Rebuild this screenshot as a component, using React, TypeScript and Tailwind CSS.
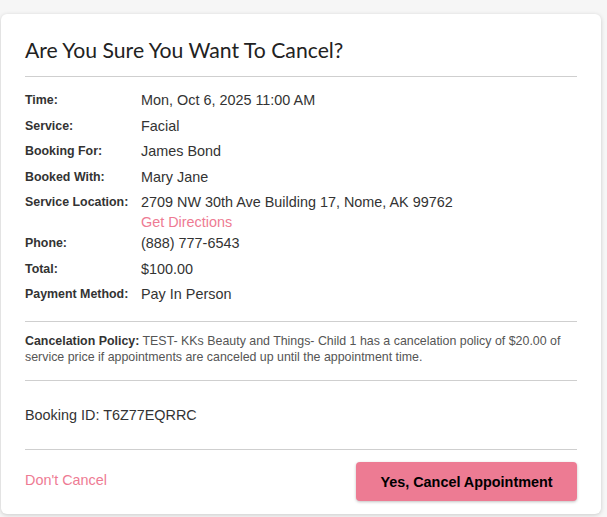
export default function App() {
  const rows: { label: string; value: string; directions?: boolean }[] = [
    { label: 'Time:', value: 'Mon, Oct 6, 2025 11:00 AM' },
    { label: 'Service:', value: 'Facial' },
    { label: 'Booking For:', value: 'James Bond' },
    { label: 'Booked With:', value: 'Mary Jane' },
    { label: 'Service Location:', value: '2709 NW 30th Ave Building 17, Nome, AK 99762', directions: true },
    { label: 'Phone:', value: '(888) 777-6543' },
    { label: 'Total:', value: '$100.00' },
    { label: 'Payment Method:', value: 'Pay In Person' },
  ]

  return (
    <div className="min-h-[517px] bg-[#f6f6f6] pt-[14px] pr-[6px] pl-[1px] font-['Liberation_Sans',Arial,sans-serif] text-[#333]">
      <div className="bg-white rounded-md shadow-[0_1px_4px_rgba(0,0,0,0.18)] px-6 pt-[22px] pb-[13px]">
        <h2 className="font-['Lato',sans-serif] text-[21.2px] leading-7 text-[#222]">Are You Sure You Want To Cancel?</h2>
        <div className="h-px bg-[#cfcfcf] mt-3" />

        {/* Booking details */}
        <div className="mt-[13px] flex flex-col gap-y-[5.5px]">
          {rows.map((row) => (
            <div key={row.label} className="flex">
              <div className="w-[116px] shrink-0 text-[12.4px] font-bold leading-5">{row.label}</div>
              <div className="text-[14.4px] leading-5">
                <div>{row.value}</div>
                {row.directions && (
                  <a href="#" className="block text-[#ee7b93] -mb-[4.5px]">Get Directions</a>
                )}
              </div>
            </div>
          ))}
        </div>

        <div className="h-px bg-[#cfcfcf] mt-[16.5px]" />
        <div className="mt-[11px] text-[12.4px] leading-4 text-[#555]">
          <b className="text-[#333]">Cancelation Policy:</b> TEST- KKs Beauty and Things- Child 1 has a cancelation policy of $20.00 of service price if appointments are canceled up until the appointment time.
        </div>
        <div className="h-px bg-[#cfcfcf] mt-[15px]" />

        <div className="mt-6 text-[14.4px] leading-5">Booking ID: T6Z77EQRRC</div>
        <div className="h-px bg-[#cfcfcf] mt-6" />

        <div className="mt-3 flex items-center justify-between">
          <a href="#" className="text-[14.4px] text-[#ee7b93] -mt-[1px]">Don't Cancel</a>
          <button className="w-[221px] h-[39px] pt-[3px] rounded bg-[#ed7b93] shadow-[0_1px_3px_rgba(0,0,0,0.25)] text-[14.4px] font-bold text-black">
            Yes, Cancel Appointment
          </button>
        </div>
      </div>
    </div>
  )
}
